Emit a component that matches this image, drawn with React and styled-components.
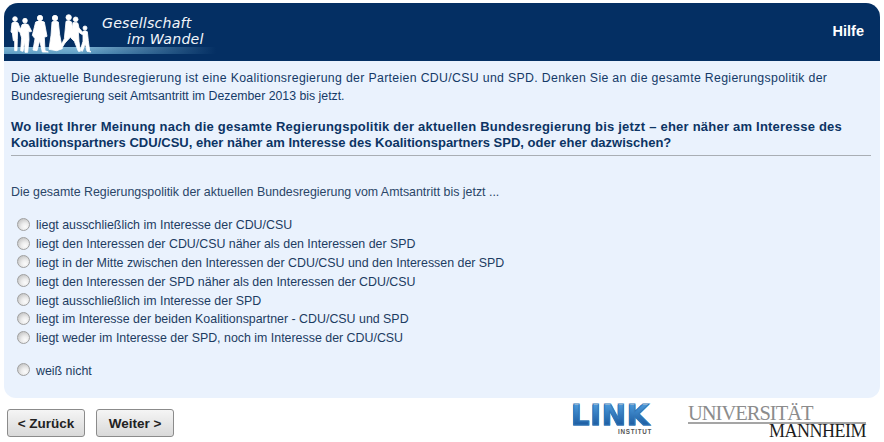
import React from "react";
import styled, { createGlobalStyle } from "styled-components";

const Global = createGlobalStyle`
  html, body { margin: 0; padding: 0; background: #fff; }
  body { font-family: "Liberation Sans", Arial, sans-serif; width: 884px; height: 442px; overflow: hidden; }
`;
const Page = styled.div`
  width: 876px;
  padding: 3px 4px 0;
`;
const Header = styled.header`
  height: 58px;
  background: #042f63;
  border-radius: 14px 14px 0 0;
  display: flex;
  align-items: stretch;
  justify-content: space-between;
  overflow: hidden;
`;
const Brand = styled.div`
  width: 212px;
  position: relative;
  background: linear-gradient(to bottom, transparent 0, transparent 44px, #7fb6d6 44px, #5f9dc3 51px, transparent 51px);
  &::after {
    content: "";
    position: absolute;
    inset: 0;
    background: linear-gradient(to right, transparent 35%, #042f63 100%);
  }
`;
const Figures = styled.svg`
  position: absolute;
  left: 1px;
  top: 5px;
  z-index: 1;
`;
const BrandText = styled.div`
  position: absolute;
  z-index: 1;
  left: 98px;
  top: 12px;
  color: #f1f5fa;
  font: italic 14.2px/16px "DejaVu Sans", sans-serif;
  letter-spacing: 0.2px;
  white-space: nowrap;
`;
const BrandLine = styled.div`
  padding-left: ${p => p.$indent || 0}px;
`;
const Help = styled.a`
  color: #fff;
  font: bold 14.5px "Liberation Sans", sans-serif;
  align-self: center;
  margin: 0 16px 2px 0;
`;
const Panel = styled.main`
  height: 337px;
  box-sizing: border-box;
  background: #eaf2fd;
  border-radius: 0 0 12px 12px;
  padding: 8px 9px 0 7px;
  color: #12355f;
  font-size: 12px;
`;
const Intro = styled.p`
  margin: 0;
  font-size: 12.3px;
  line-height: 18px;
  color: #153a68;
  &::first-line {
    letter-spacing: 0.33px;
  }
`;
const Question = styled.p`
  margin: 14px 0 0;
  padding-bottom: 4px;
  font-weight: bold;
  font-size: 13px;
  line-height: 16px;
  color: #0c3464;
  border-bottom: 1px solid #a9aeb4;
  &::first-line {
    letter-spacing: 0.22px;
  }
`;
const Lead = styled.p`
  margin: 28px 0 0;
  font-size: 12.4px;
  line-height: 16px;
  color: #2a4668;
`;
const Options = styled.div`
  margin-top: 16px;
  display: flex;
  flex-direction: column;
`;
const Option = styled.label`
  height: 18.8px;
  display: flex;
  align-items: center;
  gap: 6px;
  padding-left: 6px;
  font-size: 12.4px;
  color: #1d3c62;
  margin-top: ${p => (p.$separate ? 14 : 0)}px;
`;
const Radio = styled.span`
  width: 13px;
  height: 13px;
  box-sizing: border-box;
  border-radius: 50%;
  border: 1px solid #a0a0a0;
  background: radial-gradient(circle at 65% 70%, #fbfbfb 0, #ececec 35%, #bdbdbd 90%);
  flex: none;
  margin-bottom: 2px;
`;
const Footer = styled.footer`
  display: flex;
  align-items: flex-start;
  padding: 11px 0 0 3px;
`;
const NavButton = styled.button`
  width: 78px;
  height: 28px;
  margin-right: 11px;
  padding: 0;
  border: 1px solid #8b8b8b;
  border-radius: 3px;
  background: linear-gradient(to bottom, #f5f5f5, #d9d9d9);
  color: #222;
  font: bold 13.5px "Liberation Sans", sans-serif;
`;
const LinkLogo = styled.div`
  margin-left: auto;
  margin-top: -4px;
  width: 81px;
  display: flex;
  flex-direction: column;
  align-items: flex-end;
`;
const LinkWord = styled.div`
  width: 100%;
  font: bold 29px/21px "DejaVu Sans", sans-serif;
  letter-spacing: 0.7px;
  background: linear-gradient(to bottom, #4a97d8, #1b5a9f);
  -webkit-background-clip: text;
  background-clip: text;
  color: transparent;
  -webkit-text-stroke: 1px #2f76b8;
`;
const LinkSub = styled.div`
  margin-top: 2px;
  font: bold 6.3px/7px "Liberation Sans", sans-serif;
  letter-spacing: 0.7px;
  color: #555;
`;
const UniLogo = styled.div`
  margin: -5px 14px 0 36px;
  width: 178px;
  font-family: "Liberation Serif", serif;
`;
const UniTop = styled.div`
  font-size: 20.5px;
  line-height: 18px;
  letter-spacing: -1px;
  color: #8c8c8c;
  border-bottom: 2px solid #a5a5a5;
  white-space: nowrap;
`;
const UniBottom = styled.div`
  font-size: 18px;
  line-height: 14px;
  color: #1c1c1c;
  text-align: right;
  letter-spacing: -0.5px;
`;

const options = [
  "liegt ausschließlich im Interesse der CDU/CSU",
  "liegt den Interessen der CDU/CSU näher als den Interessen der SPD",
  "liegt in der Mitte zwischen den Interessen der CDU/CSU und den Interessen der SPD",
  "liegt den Interessen der SPD näher als den Interessen der CDU/CSU",
  "liegt ausschließlich im Interesse der SPD",
  "liegt im Interesse der beiden Koalitionspartner - CDU/CSU und SPD",
  "liegt weder im Interesse der SPD, noch im Interesse der CDU/CSU",
];

export default function App() {
  return (
    <>
      <Global />
      <Page>
        <Header>
          <Brand>
            <Figures width="95" height="50" viewBox="0 0 285 150">
              <g fill="#fff" stroke="#fff" strokeWidth="2.5" strokeLinejoin="round">
                <circle cx="30" cy="33" r="7" />
                <path d="M21 45 Q30 38 39 45 L48 68 L42 72 L38 62 L37 95 L36 128 L29 128 L29 98 L25 98 L22 75 L18 72 Z" />
                <circle cx="60" cy="38" r="7" />
                <path d="M51 50 Q60 44 70 50 L80 70 L74 72 L71 68 L72 95 L68 133 L60 133 L59 100 L54 130 L47 128 L50 90 L44 70 Z" />
                <circle cx="105" cy="30" r="8" />
                <path d="M92 42 Q105 35 118 42 L126 85 L118 88 L120 128 L130 132 L112 132 L104 98 L96 128 L84 126 L90 92 L82 82 Z" />
                <circle cx="150" cy="30" r="8" />
                <path d="M141 42 Q150 36 160 42 L164 80 L172 122 L155 128 L132 124 L138 82 Z" />
                <circle cx="191" cy="28" r="8" />
                <path d="M183 40 Q192 34 200 42 L204 85 L196 88 L180 105 L172 118 L168 112 L178 92 Z" />
                <circle cx="212" cy="34" r="7" />
                <path d="M204 44 Q212 40 219 46 L222 60 L236 76 L232 80 L220 72 L222 100 L226 130 L220 130 L208 100 L198 90 Z" />
                <circle cx="240" cy="60" r="6" />
                <path d="M234 70 Q241 66 247 71 L250 98 L254 128 L258 132 L246 130 L241 108 L232 130 L226 126 L234 100 Z" />
              </g>
            </Figures>
            <BrandText>
              <BrandLine>Gesellschaft</BrandLine>
              <BrandLine $indent={25}>im Wandel</BrandLine>
            </BrandText>
          </Brand>
          <Help>Hilfe</Help>
        </Header>
        <Panel>
          <Intro>
            Die aktuelle Bundesregierung ist eine Koalitionsregierung der Parteien CDU/CSU und SPD. Denken Sie an die gesamte Regierungspolitik der Bundesregierung seit Amtsantritt im Dezember 2013 bis jetzt.
          </Intro>
          <Question>
            Wo liegt Ihrer Meinung nach die gesamte Regierungspolitik der aktuellen Bundesregierung bis jetzt – eher näher am Interesse des Koalitionspartners CDU/CSU, eher näher am Interesse des Koalitionspartners SPD, oder eher dazwischen?
          </Question>
          <Lead>Die gesamte Regierungspolitik der aktuellen Bundesregierung vom Amtsantritt bis jetzt ...</Lead>
          <Options>
            {options.map(o => (
              <Option key={o}><Radio />{o}</Option>
            ))}
            <Option $separate><Radio />weiß nicht</Option>
          </Options>
        </Panel>
        <Footer>
          <NavButton>&lt; Zurück</NavButton>
          <NavButton>Weiter &gt;</NavButton>
          <LinkLogo>
            <LinkWord>LINK</LinkWord>
            <LinkSub>INSTITUT</LinkSub>
          </LinkLogo>
          <UniLogo>
            <UniTop>UNIVERSITÄT</UniTop>
            <UniBottom>MANNHEIM</UniBottom>
          </UniLogo>
        </Footer>
      </Page>
    </>
  );
}
